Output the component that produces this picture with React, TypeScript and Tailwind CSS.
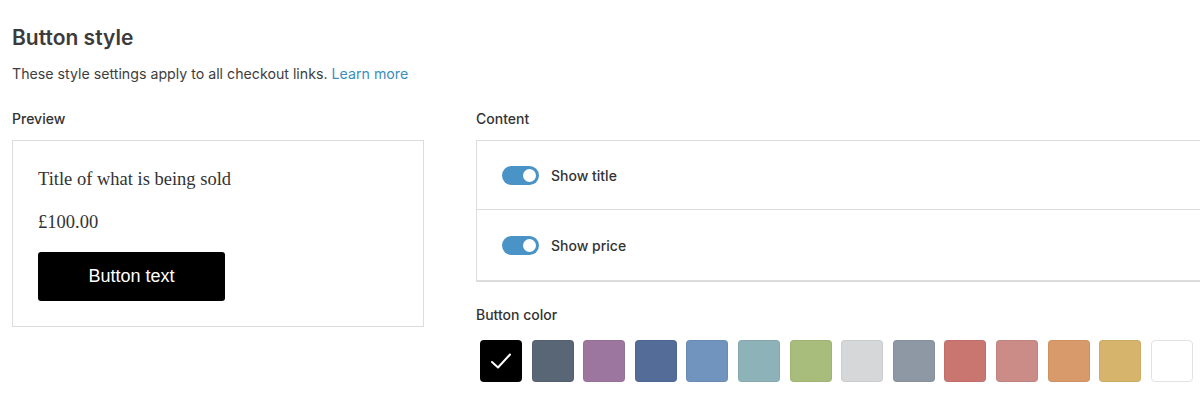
import React from "react";

const swatches = [
  "#000000",
  "#596675",
  "#9d76a0",
  "#546c98",
  "#7094bd",
  "#8db2b8",
  "#a8bd7b",
  "#d6d7d9",
  "#8d98a4",
  "#c97570",
  "#cb8b86",
  "#d89a6a",
  "#d6b46b",
  "#ffffff",
];

function Toggle() {
  return (
    <div className="w-[37px] h-[19px] rounded-full bg-[#4a93c6] flex items-center justify-end pr-[1px]">
      <div className="w-[17px] h-[17px] rounded-full bg-white border-[2px] border-[#4a93c6] box-border" />
    </div>
  );
}

export default function App() {
  return (
    <div
      className="w-[1200px] h-[400px] overflow-hidden bg-white text-[#3a3a3a]"
      style={{ fontFamily: "Inter, 'Noto Sans', sans-serif" }}
    >
      <div className="pl-3 pt-6">
        <h1 className="text-[21px] leading-[28px] font-semibold text-[#3b3b3b]">Button style</h1>
        <p className="mt-3 text-[14.2px] leading-[20px] text-[#3e3e3e]">
          These style settings apply to all checkout links.{" "}
          <span className="text-[#3b8ebd]">Learn more</span>
        </p>
        <div className="flex gap-[52px] mt-[25px]">
          <div className="w-[412px] shrink-0">
            <div className="text-[14px] leading-[20px] font-medium text-[#333]">Preview</div>
            <div className="mt-[11px] border border-[#dcdcdc] pl-[25px] pt-[26px] pb-[25px]">
              <div
                className="text-[18.5px] leading-[24px] text-[#333]"
                style={{ fontFamily: "'Liberation Serif', 'Times New Roman', serif" }}
              >
                Title of what is being sold
              </div>
              <div
                className="mt-[19px] text-[18.5px] leading-[24px] text-[#333]"
                style={{ fontFamily: "'Liberation Serif', 'Times New Roman', serif" }}
              >
                £100.00
              </div>
              <div
                className="mt-[18px] w-[187px] h-[49px] bg-black rounded-[3px] flex items-center justify-center text-white text-[18px]"
                style={{ fontFamily: "'Liberation Sans', Arial, sans-serif" }}
              >
                Button text
              </div>
            </div>
          </div>
          <div className="w-[760px] shrink-0">
            <div className="text-[14px] leading-[20px] font-medium text-[#333]">Content</div>
            <div className="mt-[11px] border border-[#dcdcdc] border-b-2">
              <div className="h-[69px] flex items-center gap-3 pl-[25px] border-b border-[#dcdcdc]">
                <Toggle />
                <span className="text-[14px] font-medium text-[#333]">Show title</span>
              </div>
              <div className="h-[70px] flex items-center gap-3 pl-[25px]">
                <Toggle />
                <span className="text-[14px] font-medium text-[#333]">Show price</span>
              </div>
            </div>
            <div className="mt-[23px] text-[14px] leading-[20px] font-medium text-[#333]">Button color</div>
            <div className="mt-[15px] flex gap-[9.6px] pl-1">
              {swatches.map((c, i) => (
                <div
                  key={c}
                  className={
                    i === 0
                      ? "w-[42px] h-[42px] rounded-[4px] flex items-center justify-center"
                      : c === "#ffffff"
                      ? "w-[42px] h-[42px] rounded-[4px] border border-[#e2e2e2]"
                      : "w-[42px] h-[42px] rounded-[4px] border border-black/5"
                  }
                  style={{ backgroundColor: c }}
                >
                  {i === 0 && (
                    <svg width="24" height="24" viewBox="0 0 24 24" fill="none">
                      <path d="M3 13 L9 18.5 L21 5.5" stroke="white" strokeWidth="2" strokeLinecap="round" strokeLinejoin="round" />
                    </svg>
                  )}
                </div>
              ))}
            </div>
          </div>
        </div>
      </div>
    </div>
  );
}
